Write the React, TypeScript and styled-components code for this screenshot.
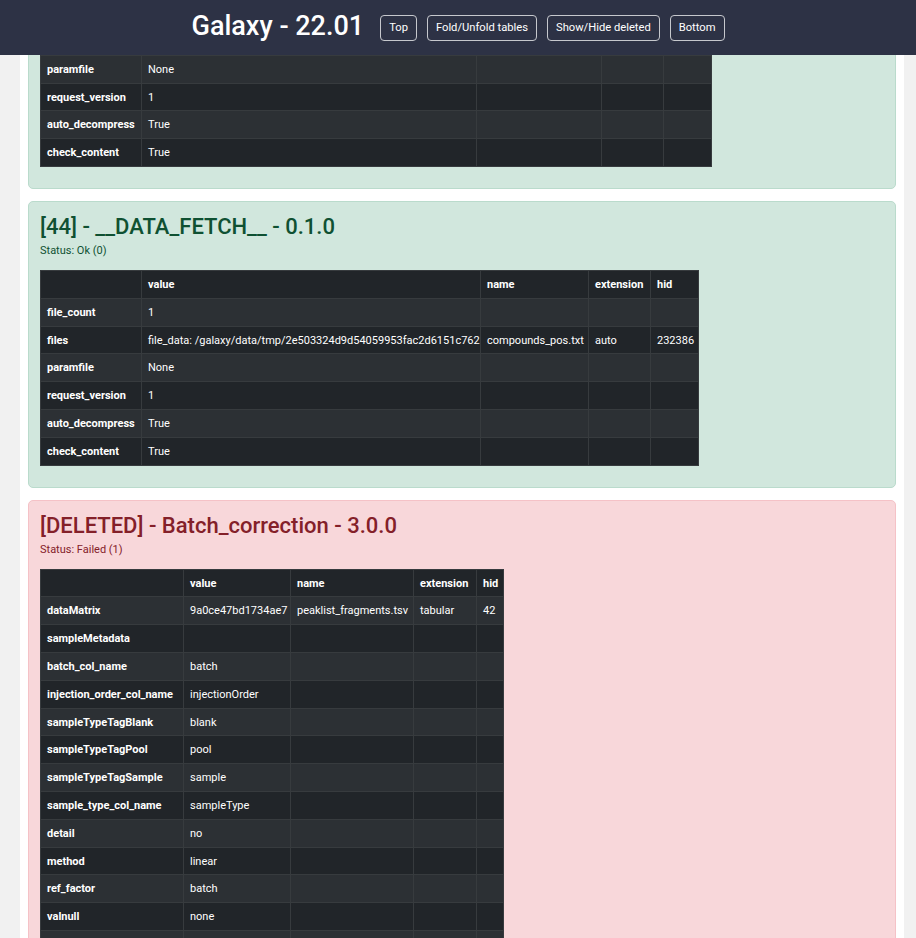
import React from 'react';
import styled, { createGlobalStyle } from 'styled-components';

type Row = { key: string; value?: string; name?: string; extension?: string; hid?: string };

interface StepData {
  title: string;
  status: string;
  deleted?: boolean;
  widths: number[];
  rows: Row[];
}

const GlobalStyle = createGlobalStyle`
  html, body {
    margin: 0;
    padding: 0;
  }
  body {
    background: #f1f1f1;
    font-family: Roboto, "Noto Sans", sans-serif;
    font-size: 12px;
    overflow: hidden;
  }
`;

const fetchRows = (file: Row): Row[] => [
  { key: 'file_count', value: '1' },
  file,
  { key: 'paramfile', value: 'None' },
  { key: 'request_version', value: '1' },
  { key: 'auto_decompress', value: 'True' },
  { key: 'check_content', value: 'True' },
];

const steps: StepData[] = [
  {
    title: '[43] - __DATA_FETCH__ - 0.1.0',
    status: 'Status: Ok (0)',
    widths: [101, 335, 125, 62, 48],
    rows: fetchRows({
      key: 'files',
      value: 'file_data: /galaxy/data/tmp/7c1a90e4b2d84f63a1e5c0d2b9f4e817',
      name: 'peaklist_fragments.tsv',
      extension: 'auto',
      hid: '232385',
    }),
  },
  {
    title: '[44] - __DATA_FETCH__ - 0.1.0',
    status: 'Status: Ok (0)',
    widths: [101, 339, 108, 62, 48],
    rows: fetchRows({
      key: 'files',
      value: 'file_data: /galaxy/data/tmp/2e503324d9d54059953fac2d6151c762',
      name: 'compounds_pos.txt',
      extension: 'auto',
      hid: '232386',
    }),
  },
  {
    title: '[DELETED] - Batch_correction - 3.0.0',
    status: 'Status: Failed (1)',
    deleted: true,
    widths: [143, 107, 123, 63, 27],
    rows: [
      { key: 'dataMatrix', value: '9a0ce47bd1734ae7', name: 'peaklist_fragments.tsv', extension: 'tabular', hid: '42' },
      { key: 'sampleMetadata' },
      { key: 'batch_col_name', value: 'batch' },
      { key: 'injection_order_col_name', value: 'injectionOrder' },
      { key: 'sampleTypeTagBlank', value: 'blank' },
      { key: 'sampleTypeTagPool', value: 'pool' },
      { key: 'sampleTypeTagSample', value: 'sample' },
      { key: 'sample_type_col_name', value: 'sampleType' },
      { key: 'detail', value: 'no' },
      { key: 'method', value: 'linear' },
      { key: 'ref_factor', value: 'batch' },
      { key: 'valnull', value: 'none' },
      { key: 'span', value: 'none' },
      { key: 'variableMetadata' },
    ],
  },
];

const Header = styled.header`
  position: fixed;
  top: 0;
  left: 0;
  right: 0;
  z-index: 10;
  height: 55px;
  background: #2d3245;
  display: flex;
  align-items: center;
  justify-content: center;
  gap: 16px;
`;

const Brand = styled.h1`
  margin: 0 0 2px;
  color: #fff;
  font-size: 27px;
  font-weight: 500;
  line-height: 1.2;
`;

const Buttons = styled.div`
  display: flex;
  gap: 10px;
`;

const NavButton = styled.button`
  height: 26px;
  padding: 0 8px;
  border: 1px solid #c6c8cd;
  border-radius: 4px;
  background: transparent;
  color: #fff;
  font-family: inherit;
  font-size: 11.2px;
  cursor: pointer;
`;

const Page = styled.main`
  width: 884px;
  min-height: 100vh;
  margin-left: 20px;
  padding: 0 8px;
  box-sizing: border-box;
  background: #fff;
`;

const StepList = styled.div`
  margin-top: -97.5px;
  display: flex;
  flex-direction: column;
  gap: 12px;
`;

const Card = styled.section<{ $deleted?: boolean }>`
  padding: 11px;
  border: 1px solid ${p => (p.$deleted ? '#f5c2c7' : '#badbcc')};
  border-radius: 5px;
  background: ${p => (p.$deleted ? '#f8d7da' : '#d1e7dd')};
  color: ${p => (p.$deleted ? '#842029' : '#0f5132')};
`;

const StepTitle = styled.h3`
  margin: 0 0 2px;
  font-size: 22px;
  font-weight: 500;
  line-height: 28px;
`;

const Status = styled.div`
  margin-bottom: 11px;
  font-size: 11px;
  line-height: 16px;
`;

const Table = styled.table<{ $width: number }>`
  width: ${p => p.$width}px;
  margin-bottom: 10px;
  border-collapse: collapse;
  table-layout: fixed;
  background: #212529;
  color: #fff;
  font-size: 11px;

  tbody tr:nth-child(odd) {
    background: #2c3034;
  }
`;

const Col = styled.col<{ $w: number }>`
  width: ${p => p.$w}px;
`;

const Cell = styled.td<{ $bold?: boolean }>`
  height: 26.8px;
  padding: 0 6px;
  border: 1px solid #373b3e;
  text-align: left;
  font-weight: ${p => (p.$bold ? 700 : 400)};
  white-space: nowrap;
  overflow: hidden;
`;

const columns: (keyof Row)[] = ['value', 'name', 'extension', 'hid'];

const ParamTable: React.FC<{ widths: number[]; rows: Row[] }> = ({ widths, rows }) => (
  <Table $width={widths.reduce((a, b) => a + b, 0)}>
    <colgroup>
      {widths.map((w, i) => <Col key={i} $w={w} />)}
    </colgroup>
    <thead>
      <tr>
        <Cell as="th" $bold />
        {columns.map(c => <Cell as="th" key={c} $bold>{c}</Cell>)}
      </tr>
    </thead>
    <tbody>
      {rows.map(r => (
        <tr key={r.key}>
          <Cell as="th" $bold>{r.key}</Cell>
          {columns.map(c => <Cell key={c}>{r[c]}</Cell>)}
        </tr>
      ))}
    </tbody>
  </Table>
);

export default function App() {
  return (
    <>
      <GlobalStyle />
      <Header>
        <Brand>Galaxy - 22.01</Brand>
        <Buttons>
          <NavButton>Top</NavButton>
          <NavButton>Fold/Unfold tables</NavButton>
          <NavButton>Show/Hide deleted</NavButton>
          <NavButton>Bottom</NavButton>
        </Buttons>
      </Header>
      <Page>
        <StepList>
          {steps.map(s => (
            <Card key={s.title} $deleted={s.deleted}>
              <StepTitle>{s.title}</StepTitle>
              <Status>{s.status}</Status>
              <ParamTable widths={s.widths} rows={s.rows} />
            </Card>
          ))}
        </StepList>
      </Page>
    </>
  );
}
